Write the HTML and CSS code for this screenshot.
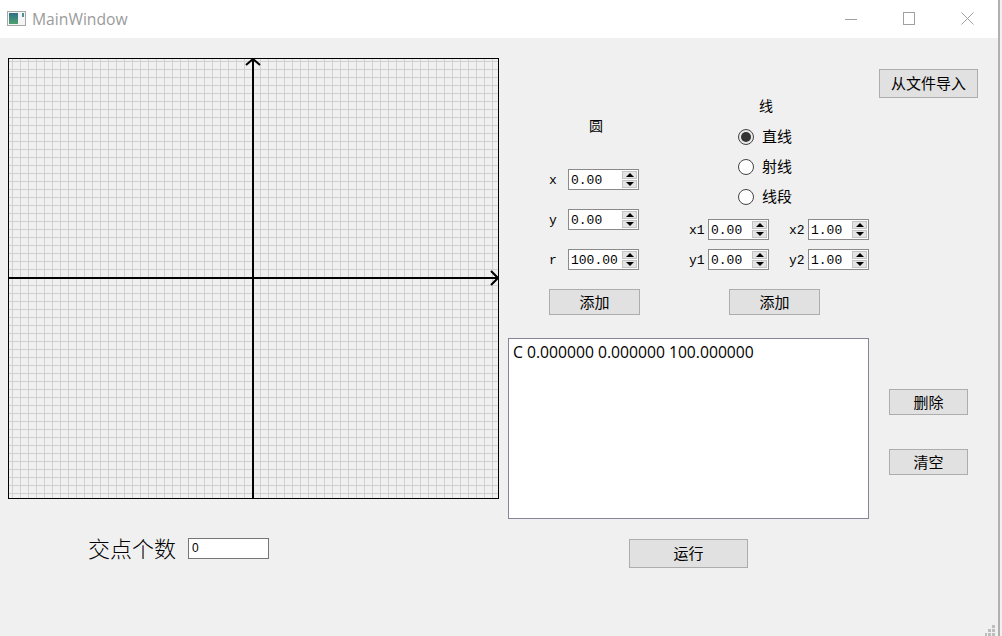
FILE: index.html
```html
<!doctype html>
<html>

<head>
    <title>MainWindow</title>
    <meta charset="utf-8">
    <link rel="stylesheet" href="styles.css">
</head>

<body>
    <div class="window">
        <header class="titlebar">
            <svg class="appicon" width="20" height="16" viewBox="0 0 20 16">
                <defs>
                    <linearGradient id="iconfill" x1="0" y1="0" x2="0" y2="1">
                        <stop offset="0" stop-color="#2f6f8a"/>
                        <stop offset="1" stop-color="#4fa070"/>
                    </linearGradient>
                </defs>
                <rect x="0.5" y="0.5" width="18" height="14" fill="#f4f4f4" stroke="#a8a8a8"/>
                <rect x="2" y="2" width="9" height="11" fill="url(#iconfill)"/>
                <rect x="15" y="2" width="2" height="4" fill="#4f8f96"/>
            </svg>
            <span class="apptitle">MainWindow</span>
            <div class="winbtns">
                <svg width="12" height="12" viewBox="0 0 12 12"><path d="M0 6.5H12" stroke="#a0a0a0"/></svg>
                <svg width="12" height="13" viewBox="0 0 12 13"><rect x="0.5" y="0.5" width="11" height="12" fill="none" stroke="#a0a0a0"/></svg>
                <svg width="13" height="13" viewBox="0 0 13 13"><path d="M0.5 0.5L12.5 12.5M12.5 0.5L0.5 12.5" stroke="#a0a0a0"/></svg>
            </div>
        </header>
        <div class="content">
            <div class="leftcol">
                <svg class="plot" width="491" height="441" viewBox="0 0 491 441">
                    <defs>
                        <pattern id="grid" x="0" y="0" width="8" height="8" patternUnits="userSpaceOnUse">
                            <path d="M4.5 0V8M0 3.5H8" stroke="#d0d0d0" fill="none"/>
                        </pattern>
                    </defs>
                    <rect x="0" y="0" width="491" height="441" fill="url(#grid)"/>
                    <rect x="0.5" y="0.5" width="490" height="440" fill="none" stroke="#000"/>
                    <path d="M245 0V440M0 220H490" stroke="#000" stroke-width="2" fill="none"/>
                    <path d="M238 7L245 1L252 7M483 213L490 220L483 227" stroke="#000" stroke-width="2" fill="none"/>
                </svg>
                <div class="countrow">
                    <span class="countlabel">交点个数</span>
                    <div class="countbox">0</div>
                </div>
            </div>
            <div class="rightcol">
                <div class="toprow">
                    <div class="circlecol">
                        <div class="grouptitle">圆</div>
                        <div class="field"><span class="lbl">x</span><div class="spin wide"><span>0.00</span><i class="arrows"><b class="up"></b><b class="down"></b></i></div></div>
                        <div class="field"><span class="lbl">y</span><div class="spin wide"><span>0.00</span><i class="arrows"><b class="up"></b><b class="down"></b></i></div></div>
                        <div class="field"><span class="lbl">r</span><div class="spin wide"><span>100.00</span><i class="arrows"><b class="up"></b><b class="down"></b></i></div></div>
                        <button class="btn addbtn">添加</button>
                    </div>
                    <div class="linecol">
                        <div class="grouptitle line">线</div>
                        <div class="radios">
                            <div class="radio"><span class="dot on"></span><span class="radiotext">直线</span></div>
                            <div class="radio"><span class="dot"></span><span class="radiotext">射线</span></div>
                            <div class="radio"><span class="dot"></span><span class="radiotext">线段</span></div>
                        </div>
                        <div class="pairs">
                            <div class="field2"><span class="lbl">x1</span><div class="spin"><span>0.00</span><i class="arrows"><b class="up"></b><b class="down"></b></i></div></div>
                            <div class="field2"><span class="lbl">x2</span><div class="spin"><span>1.00</span><i class="arrows"><b class="up"></b><b class="down"></b></i></div></div>
                            <div class="field2"><span class="lbl">y1</span><div class="spin"><span>0.00</span><i class="arrows"><b class="up"></b><b class="down"></b></i></div></div>
                            <div class="field2"><span class="lbl">y2</span><div class="spin"><span>1.00</span><i class="arrows"><b class="up"></b><b class="down"></b></i></div></div>
                        </div>
                        <button class="btn addbtn add2">添加</button>
                    </div>
                    <button class="btn importbtn">从文件导入</button>
                </div>
                <div class="listrow">
                    <div class="listbox">C 0.000000 0.000000 100.000000</div>
                    <div class="sidebtns">
                        <button class="btn sidebtn">删除</button>
                        <button class="btn sidebtn">清空</button>
                    </div>
                </div>
                <button class="btn runbtn">运行</button>
            </div>
            <svg class="grip" width="10" height="11" viewBox="0 0 10 11">
                <path d="M7 0h3v3H7zM3 4h3v3H3zM7 4h3v3H7zM0 8h2v3H0zM3 8h3v3H3zM7 8h3v3H7z" fill="#bdbdbd"/>
            </svg>
        </div>
    </div>
</body>

</html>
```

FILE: styles.css
```css
* {
    box-sizing: border-box;
}

body {
    margin: 0;
    background-color: #f0f0f0;
    font-family: "Noto Sans CJK SC", sans-serif;
    color: #000;
}

.window {
    width: 1000px;
    height: 636px;
    border-right: 2px solid #b0b0b0;
    display: flex;
    flex-direction: column;
}

.titlebar {
    height: 38px;
    background-color: #fff;
    display: flex;
    align-items: center;
    padding-left: 7px;
}

.appicon {
    margin-top: -1px;
}

.apptitle {
    margin-left: 5px;
    font-family: "Open Sans", sans-serif;
    font-size: 15.7px;
    color: #9b9b9b;
}

.winbtns {
    margin-left: auto;
    display: flex;
    align-items: center;
    gap: 46px;
    padding-right: 24px;
    margin-top: -1px;
}

.content {
    flex: 1;
    position: relative;
    display: flex;
    padding: 20px 0 0 8px;
}

.leftcol {
    width: 500px;
}

.plot {
    display: block;
}

.countrow {
    display: flex;
    align-items: flex-start;
    margin-top: 39px;
    padding-left: 80px;
}

.countlabel {
    font-size: 22px;
    font-weight: 300;
    line-height: 18px;
    width: 100px;
    white-space: nowrap;
}

.countbox {
    width: 81px;
    height: 21px;
    background-color: #fff;
    border: 1px solid #767676;
    padding-left: 3px;
    font-family: "Liberation Sans", sans-serif;
    font-size: 12px;
    line-height: 19px;
}

.rightcol {
    width: 470px;
    position: relative;
}

.toprow {
    display: flex;
    height: 280px;
}

.circlecol {
    flex: none;
    width: 181px;
    padding-left: 41px;
}

.grouptitle {
    font-size: 14px;
    line-height: 20px;
    margin-top: 57px;
    margin-bottom: 34px;
    padding-left: 40px;
}

.grouptitle.line {
    margin-top: 37px;
    margin-bottom: 0;
    padding-left: 70px;
}

.field {
    display: flex;
    align-items: center;
    height: 21px;
    margin-bottom: 19px;
}

.lbl {
    width: 19px;
    margin-top: 2px;
    font-family: "Liberation Mono", monospace;
    font-size: 13px;
}

.spin {
    width: 61px;
    height: 21px;
    background-color: #fff;
    border: 1px solid #8a8a8a;
    display: flex;
    align-items: center;
    justify-content: space-between;
    padding: 0 1px 0 2px;
    font-family: "Liberation Mono", monospace;
    font-size: 13px;
}

.spin span {
    margin-top: 2px;
}

.spin.wide {
    width: 71px;
}

.arrows {
    width: 15px;
    height: 17px;
    display: flex;
    flex-direction: column;
    gap: 1px;
}

.arrows b {
    flex: 1;
    background-color: #e4e4e4;
    border: 1px solid #c4c4c4;
    display: flex;
    align-items: center;
    justify-content: center;
}

.arrows b::before {
    content: "";
    border-left: 4px solid transparent;
    border-right: 4px solid transparent;
}

.arrows .up::before {
    border-bottom: 4px solid #000;
}

.arrows .down::before {
    border-top: 4px solid #000;
}

.btn {
    display: block;
    flex: none;
    background-color: #e1e1e1;
    border: 1px solid #adadad;
    font-family: "Noto Sans CJK SC", sans-serif;
    font-size: 15px;
    padding: 0 0 2px;
    color: #000;
}

.addbtn {
    width: 91px;
    height: 26px;
}

.linecol {
    flex: none;
    width: 180px;
}

.radios {
    padding-left: 49px;
    margin-top: 7px;
}

.radio {
    display: flex;
    align-items: center;
    height: 30px;
    font-size: 15px;
}

.radiotext {
    margin-bottom: 4px;
}

.dot {
    width: 16px;
    height: 16px;
    border: 1px solid #444;
    border-radius: 50%;
    background-color: #fff;
    margin-right: 8px;
    display: flex;
    align-items: center;
    justify-content: center;
}

.dot.on {
    background-color: #e8e8e8;
}

.dot.on::before {
    content: "";
    width: 10px;
    height: 10px;
    border-radius: 50%;
    background-color: #333;
}

.pairs {
    display: grid;
    grid-template-columns: 100px 80px;
    row-gap: 9px;
    margin-top: 7px;
}

.field2 {
    display: flex;
    align-items: center;
}

.add2 {
    margin-top: 19px;
    margin-left: 40px;
}

.importbtn {
    width: 99px;
    height: 29px;
    margin-top: 11px;
    margin-left: 10px;
}

.listrow {
    display: flex;
}

.listbox {
    width: 361px;
    height: 181px;
    background-color: #fff;
    border: 1px solid #84849a;
    padding: 2px 4px;
    font-family: "Open Sans", sans-serif;
    font-size: 15.7px;
    line-height: 22px;
}

.sidebtns {
    padding: 51px 0 0 20px;
}

.sidebtn {
    width: 79px;
    height: 26px;
    margin-bottom: 34px;
}

.runbtn {
    width: 119px;
    height: 29px;
    margin: 20px 0 0 121px;
}

.grip {
    position: absolute;
    right: 3px;
    bottom: 0;
}
```
